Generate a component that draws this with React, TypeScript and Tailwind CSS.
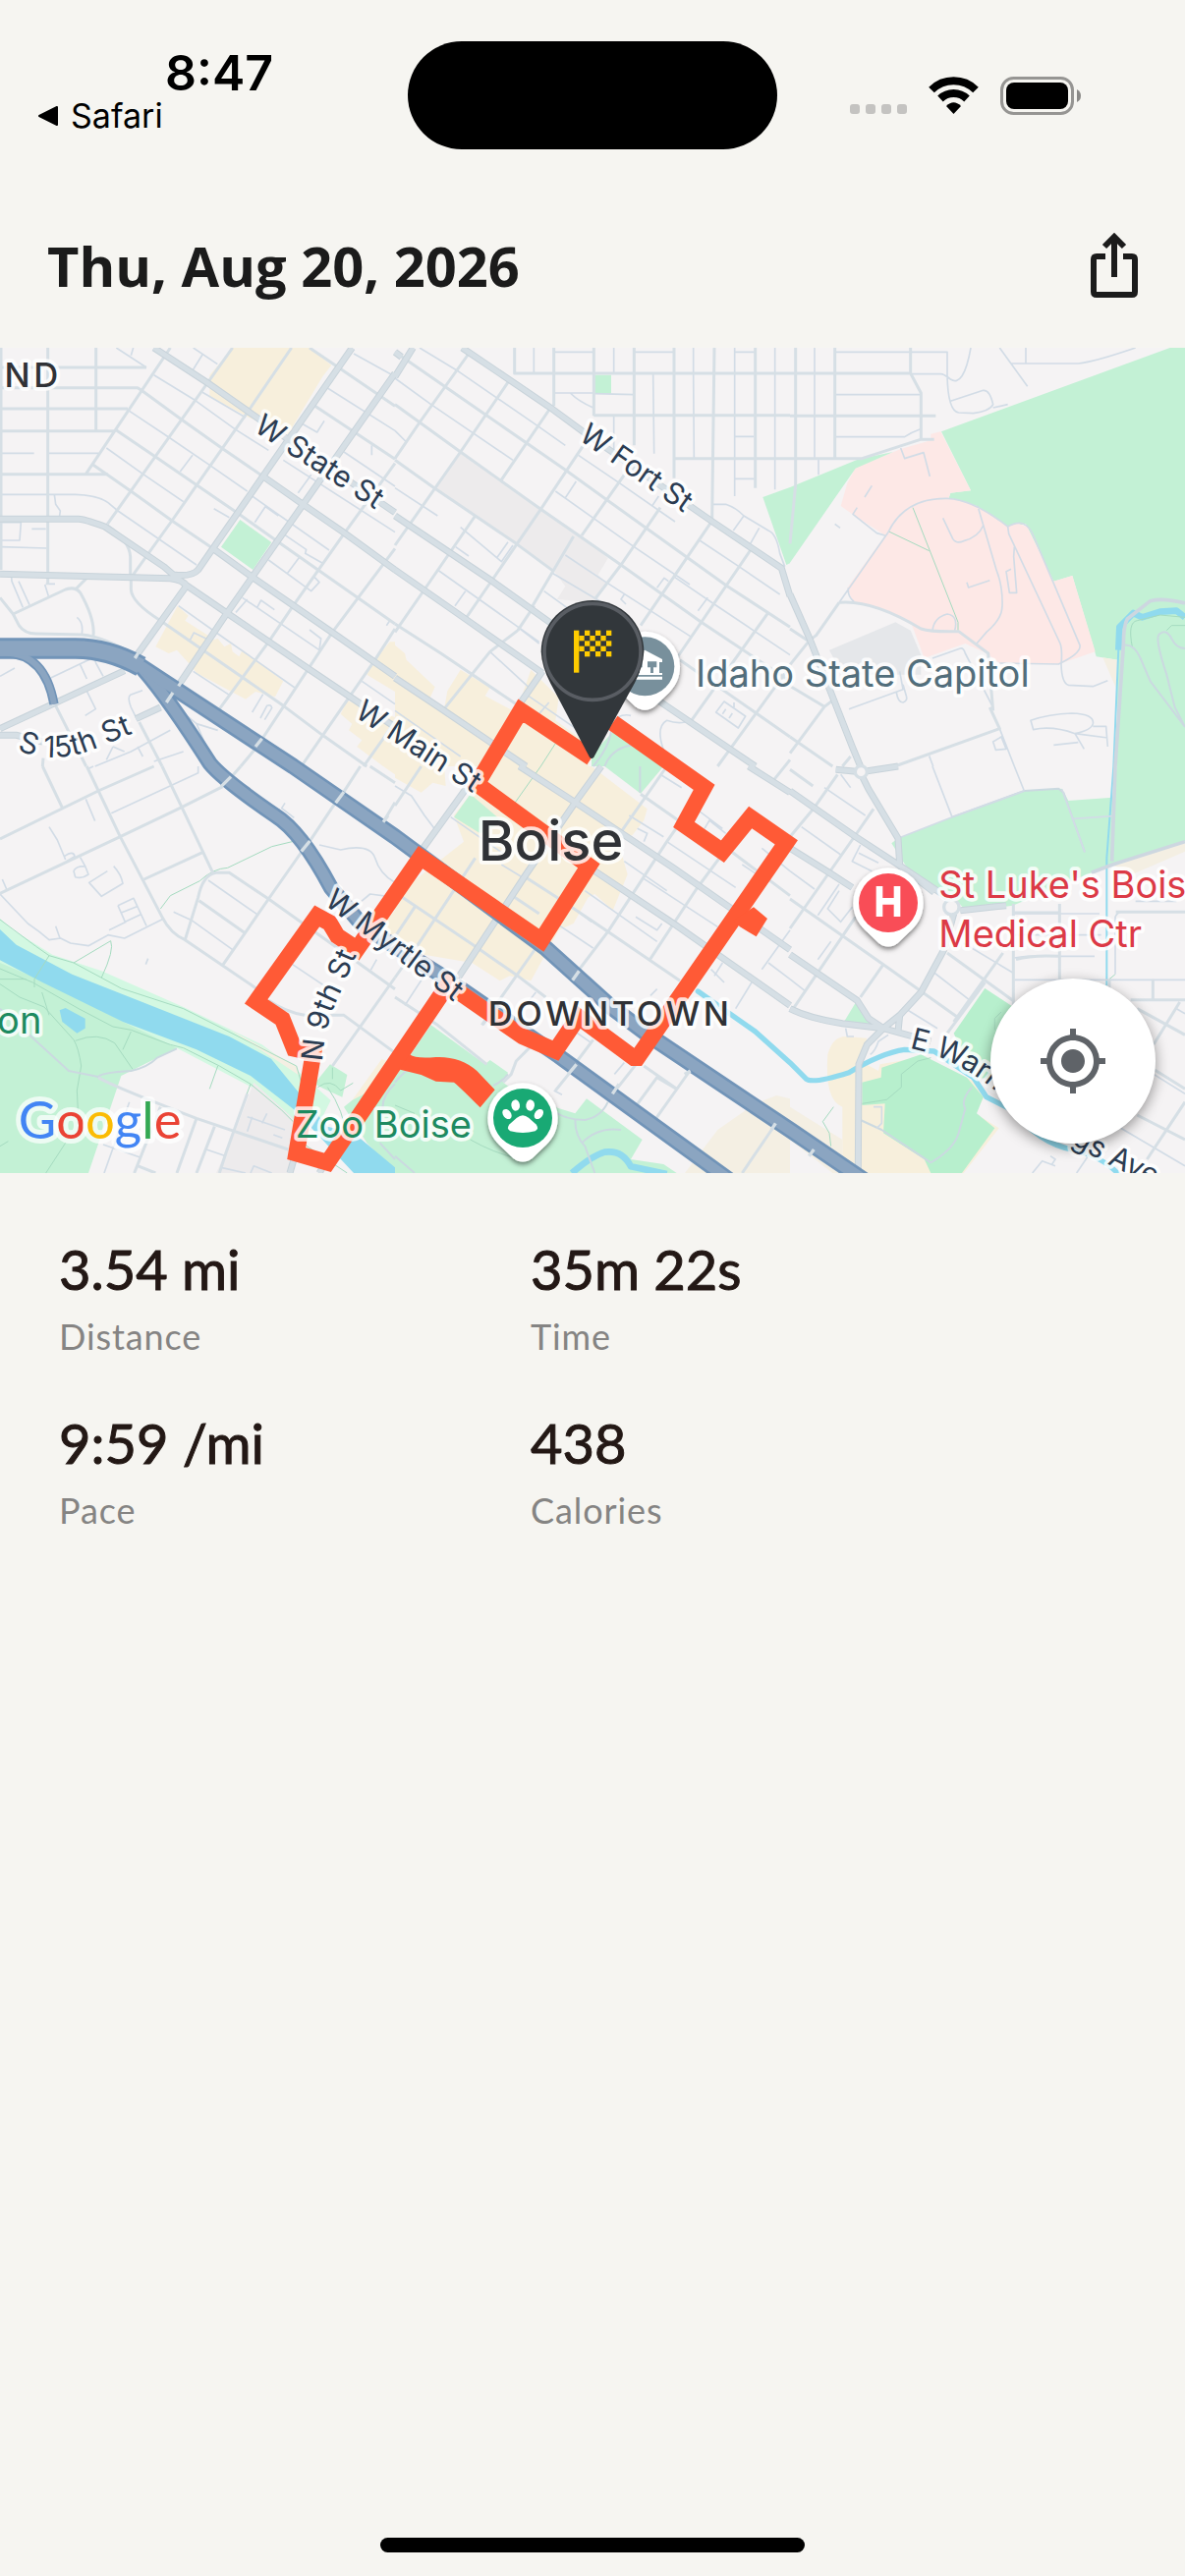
import { MdMyLocation } from "react-icons/md";

type Tile = {
  x: number;
  y: number;
  areas: [string, string][];
  minor: string;
  local: string;
  arterial: string;
  park: string;
  trail: string;
};

const GREEN = "#c3f1d5";
const DEEP_GREEN = "#b7efcd";
const SAND = "#f7efdc";
const PALE_SAND = "#f4efe3";
const PINK = "#fde8e6";
const GREY = "#edebec";
const WATER = "#90daee";

// The map is cut in six tiles, every path is in its own tile's units
const tiles: Tile[] = [
  {
    x: 0,
    y: 0,
    areas: [
      [SAND, "M712 12H945L1012 65L985 100L880 275L760 225L640 160V95Z"],
      [GREEN, "M733 537L829 606L772 690L675 620Z"],
      [SAND, "M542 800L575 830L565 845L635 890L630 910L665 900L685 925L705 915L710 940L730 955L740 935L865 1030L840 1078L780 1062L750 1085L600 1005L585 985L540 935L515 945L475 925Z"],
      [SAND, "M1206 910H1190L1145 965L1120 1010L1206 1062Z"],
      [SAND, "M1206 1140L1060 1090L1040 1130L1075 1160L1065 1180L1105 1210L1090 1230L1170 1290H1206Z"],
    ],
    minor:
      "M355 12L447 72M407 12L400 35M590 12L664 62M618 33L590 78M148 334H300M5 334H104M5 460H230Q300 462 330 485L360 510L600 675M166 460L170 490L184 510L182 525M5 545H64L60 600H5M97 565H140M5 620L142 624M395 205L515 285L640 370L755 450M325 318L437 398L560 482M470 95L595 172L720 262L820 325M618 148L750 225M550 390L588 340M770 465L1005 630M653 503L700 530M778 545L810 497L850 525M865 355L1206 575M865 580L935 628L932 640L985 670M820 660L950 755L975 728L960 712M878 700L915 650M740 775L975 935L980 900L945 873M720 820L755 780M785 805L797 783L838 812M545 800L665 885L900 1050M580 905L592 882L640 905M590 1000L700 1072M925 245L968 270L990 235M1050 330L1206 435M1000 135L1206 265M1080 30L1206 100M35 712L36 725L70 805M57 725L90 797M137 735L148 770M140 733H168M235 835Q255 850 250 885M0 1015L45 990M155 1020L270 965Q290 955 293 975L315 1015M245 980L265 1023M265 1060L292 1115L260 1135M435 1058L398 1072Q388 1080 400 1110L420 1150M520 1095L600 1160L665 1180M600 1160L630 1230M770 1125L803 1070M795 1143L815 1105Q828 1100 830 1112L808 1148M1105 1030L1206 1100M290 1290L400 1245L520 1180M345 1230L380 1245M420 1230L436 1260M345 1230L325 1270M470 1275L560 1245M1180 860L1192 842M1135 310V340M910 455L950 400",
    local:
      "M3 12V690M146 12V735M293 12V265M0 72H447M0 134H420L432 142M0 198H390M0 266H350M0 398H330M262 398L520 12M328 550L710 12M403 710L525 540L765 195L890 12M432 142L553 230L680 320L808 408M350 260L475 345L730 520L850 605L1206 855M285 370L403 452L525 540L650 625M945 12L1030 70L1206 190M955 185L1206 352M670 1115L820 910L895 800L1050 580L1206 365M785 1230L1015 880L1206 625M920 1290L1145 965L1206 870M735 1290L785 1230M1110 1290L1206 1155M400 710V750Q402 790 490 845L620 935L865 1105L985 1195L1120 1290M328 555Q395 600 398 650V710M0 775L40 825L58 860Q75 885 110 885L250 888Q320 895 420 955M40 825L200 750Q230 740 245 760Q290 840 285 890M230 750L265 715M170 1105L263 1290M425 1155L495 1290M130 1290L132 1265",
    arterial:
      "M470 12L635 120L870 285L1206 515M808 408L925 490L1048 575L1206 690M650 625L770 712L1020 885L1206 1015M0 535H240Q255 535 320 558L500 680Q540 715 570 738M0 703L520 716Q560 722 570 738L693 822L943 993L1206 1170M1075 12L650 625L605 690Q585 712 530 705M1206 90L693 822L550 1035M570 738L418 950M0 1175L380 998M0 1195H50L130 1215M415 1145L490 1110M508 1092L528 1065",
    park: "",
    trail: "",
  },
  {
    x: 1206,
    y: 0,
    areas: [
      [GREY, "M200 330L450 505L570 585L650 655L620 705L645 730L610 790L495 780L520 740L490 700L370 610L120 440Z"],
      [GREEN, "M610 95H660V152H610Z"],
      [GREEN, "M1123 468L1206 438V670L1195 675Z"],
      [SAND, "M0 920L30 945L35 965L122 1048L105 1085L150 1115L160 1060L200 995L290 1050L275 1075L370 1125L415 995L500 1080L490 1150L600 1230L590 1290H0Z"],
      [GREEN, "M600 1255L665 1185L830 1290H600Z"],
    ],
    minor:
      "M424 12V90M668 12V90M488 25H605M488 150H605M535 150Q560 175 605 195M610 152L727 155M730 25H850M668 220V330M788 92L791 335M911 12V90L913 350M1037 12V465M1037 25H1100M1037 283H1095M1037 412H1097M1160 12V445M75 12L195 85L435 250L520 310M560 340L685 425L855 543M0 105L110 185L360 355M490 450L610 535L730 620L900 735M0 440L130 525M0 265L35 300L0 350M520 470L553 420M785 495L805 465M200 560L325 665L360 615M185 620L225 648M310 655L345 605M130 690L440 910M455 755L600 860M183 800L215 755M375 865L440 915M480 700L650 800M520 645L640 725L905 895M800 745L822 715L835 725M705 795L690 780L700 765M925 815L955 775M850 710L975 795L1206 950M930 600L1050 680L1175 765M970 490H1010Q1040 500 1065 525L1140 570Q1165 580 1175 640L1190 680M1033 570L1065 525M1085 610L1112 562M290 940L415 1055M980 1125L1005 1092L1070 1137L1048 1173ZM1000 1130L1010 1115M1020 1143L1030 1128M1035 1110V1095M820 1240Q795 1170 830 1150Q860 1160 885 1155M0 1120L200 1260M400 1070L560 1180M440 1130L470 1095M680 1140Q700 1130 720 1135",
    local:
      "M365 12V90H1206M485 12V190M607 12V220M607 218H1206M730 12V310M852 12V410M855 350H1206M975 12L968 540M1100 12V440M0 25L275 215L520 385L770 565L1015 740L1206 865M0 185L200 330L445 505L690 675L935 850L1206 1030M0 355L120 440L370 610L485 695M0 350L75 240L225 30M0 615L200 330L350 110M325 415L475 195M0 880L90 750L245 525M215 840L445 505L575 310M420 800L545 588M610 780L690 675L810 500M570 585L700 400M750 860L965 545M860 960L1085 630M375 875L425 800M985 1290L1206 985M905 1150L1140 820M870 965L1206 1200M0 855L140 945L370 1100M150 1115L290 940L375 875",
    arterial:
      "M205 12L475 195L570 265L965 540L1180 685L1206 770M0 525L290 720L500 870L820 1100L1100 1290M0 690L215 840L450 1005M0 1020L135 1110L400 1290M450 1000L380 1100M0 100L55 12M0 25L20 40",
    park: "M660 1180Q655 1230 605 1290M725 1225Q660 1235 640 1290",
    trail: "M443 510L372 610M490 1220L445 1290",
  },
  {
    x: 2412,
    y: 0,
    areas: [
      [GREEN, "M1160 12H1206V1290H998L1000 965L935 955L862 708L805 725L720 550L665 560L570 495L485 470L490 455L552 448L462 268Z"],
      [PINK, "M430 275L460 268L552 448L490 455L485 470L570 495L665 558L695 547L725 560L805 725L862 708L932 940L820 978L640 975L600 945L535 915L410 960L372 858L300 820L190 785L175 745L290 585L190 520L155 495L175 425L200 378L340 320L430 295Z"],
      [GREEN, "M0 438L210 352L315 330L200 380L0 668Z"],
      ["#e5e7ea", "M120 935L322 850L368 875L400 950V1010H160Z"],
      [PALE_SAND, "M955 958L1000 965L995 1050Z"],
    ],
    minor:
      "M75 12V350M87 350V400M140 25H480V95Q482 205 515 210L560 212Q610 205 620 185Q610 140 590 142L490 175M370 92H460Q470 92 490 108Q530 135 552 12M140 155H400M140 284H350Q370 270 398 260M620 195L665 185M640 12L725 130M675 60H880Q930 55 1055 12M720 12V60M338 318L350 350L408 332L427 405M228 468L250 433M205 500L192 520L265 578L290 585M137 550L153 562M150 790L300 575Q350 470 480 472Q560 475 665 558Q720 525 745 590L885 920Q890 945 820 978L640 975M665 558L668 580L825 915Q832 935 828 980Q830 1035 850 1042L925 1046L970 1028M573 495L630 690Q650 740 648 800Q648 840 600 880L570 915M467 532L497 595Q508 612 530 602Q575 590 590 555M685 620L683 650L692 760H670L660 695L675 688M540 728L545 744L610 722M178 745Q175 770 195 787M435 875Q440 835 480 825Q515 830 503 875M735 1150Q790 1130 860 1128Q930 1130 925 1160Q920 1180 870 1190Q800 1165 743 1178ZM870 1190L970 1203M925 1168H965L970 1230M870 1190L898 1237M805 1225L880 1217M435 960L520 930Q530 928 535 945L620 1110M180 1115L345 1055L335 1000M325 1065Q330 1095 345 1095Q360 1090 355 1075L345 1040M640 1175L685 1290M620 1215L645 1200L660 1237L628 1240ZM425 1258L437 1290",
    local:
      "M17 12V430L0 610M137 12V350M0 90H370M0 220H445M368 12V90L400 150V290M0 350H220L398 292H440M150 790Q250 780 400 870Q430 880 515 878L605 945L620 1120M150 790L80 890L60 905L0 980M320 1290L640 1175L610 1110M0 870L60 910M0 1045L105 1108L0 1250M105 1108L135 1085M0 1200L130 1290M160 1290L185 1260",
    arterial: "M0 765L60 900L190 1230L215 1290",
    park: "M1020 920Q1050 915 1070 960L1100 1030L1206 1170M1206 930Q1180 930 1165 900Q1150 870 1130 885Q1110 890 1150 1010L1175 1110L1206 1170",
    trail: "M375 500L513 850V875M302 573L425 632M1045 925Q1030 850 1060 845L1130 828L1206 835M1150 875L1165 860H1206",
  },
  {
    x: 0,
    y: 1290,
    areas: [
      ["#d3f8e2", "M0 465L40 500L160 575L310 625L560 735L800 850L915 935L1010 1020L970 1100H900L765 978L540 860L360 800L0 640Z"],
      [GREEN, "M0 600L130 655L250 715L375 780L540 860L370 945L270 1242H0Z"],
      [PALE_SAND, "M700 803L905 915L915 945L840 895Z"],
      [GREY, "M775 965L900 1080L880 1242H660L720 1110Z"],
      [GREEN, "M1008 910L1060 942L1045 1010L1000 990L960 970Z"],
      [SAND, "M1165 895L1206 905L1100 1030L1075 1020Z"],
      [GREEN, "M1050 1040L1075 1020L1206 950V1242L1120 1150Z"],
      [WATER, "M0 498L50 545L220 635L700 825L828 893L915 1000L1000 1100L1080 1120L1206 1225V1242H1080L900 1050L765 945L600 865L375 780L130 660L0 592Z"],
      [WATER, "M182 745L200 738L260 770V800L235 815L190 780Z"],
      [SAND, "M1170 0H1206V25Z"],
      [SAND, "M1206 440L1150 500L1206 540Z"],
    ],
    minor:
      "M262 100L290 167M150 185L175 225L200 285M196 275Q225 255 228 275L203 290M225 320Q230 305 260 305L270 330Q250 345 230 338ZM245 278L260 305M328 320L272 355L310 397L375 358Q370 330 347 305M360 425L408 403L447 487M360 425L382 475L430 452M370 447L418 428M333 500L385 475M7 345L20 375M0 390L85 480L120 505L150 530L185 525L215 540L270 548L330 515L380 525L500 465M170 488L183 525M530 445L585 470L710 560M636 348L785 452M340 143L605 20V0M268 8L285 0M870 112L860 128L898 157M445 605L452 587M975 240L1040 255Q1130 235 1145 280Q1160 330 1206 355M1070 440L1130 390L1206 400M1132 622L1150 590M893 605L1020 690M318 1242L395 1025M315 1155L430 1195M630 1170L690 1190M755 1070L870 1110M770 1070L755 1115M815 1060L800 1090M835 1125L862 1135M675 1225L750 1242M765 1242L775 1220L830 1242",
    local:
      "M130 0L192 130M265 0L367 215L495 460Q520 510 565 530L785 680M495 0L555 125L650 325M0 222L300 75L470 0M0 388L367 215L555 125L680 62M440 345L620 262M565 530L605 400Q620 330 660 325H700L820 405L1206 680M608 410L745 507M680 607L820 405L925 255M700 40L735 0M1100 0L1045 85M1025 110L945 230M1015 915L1206 645M820 715Q870 750 930 760H1050L1206 875M1130 0L1206 50M1170 170L1206 110M300 950Q340 975 600 1075L880 1170M600 1075L540 1242M490 1040L410 1242M420 1220L475 1242M655 1100L600 1242M670 1242L690 1180L755 1000",
    arterial: "M900 1190L885 1242M1000 1200L975 1242",
    park: "M0 740L95 825L210 930L300 948Q310 935 400 930Q450 920 480 890L540 862M300 950L350 975M1206 970Q1160 1010 1170 1060M1160 1150L1206 1200",
    trail:
      "M490 435L520 395L610 350Q650 312 695 310L830 245L900 228M225 600L338 533Q350 560 310 645M150 578L105 650V675M0 468L110 550L150 578L225 600L370 678L560 740L905 915L930 1000M0 618L100 660L240 740L345 795L400 805L520 850L560 860L670 915L765 970L860 1050L895 1085M0 650H80M0 665L60 705L135 735L225 835Q240 860 248 915L235 990L238 1050M230 838Q300 810 350 845L405 925M375 865L400 810M665 915L640 985M128 690L150 760M140 1242L200 1150M765 970L750 1010M970 980Q1010 950 1040 990L1078 967M1015 920V955M1000 980Q1050 1050 1060 1140M930 1155L1060 1242M0 1160L25 1145",
  },
  {
    x: 1206,
    y: 1290,
    areas: [
      [SAND, "M250 0H600L770 130L760 165L725 210L680 225L710 330L665 440L610 390L590 400L545 480L500 500L415 655L350 640L320 655L235 600L0 560V395L210 230L180 150L250 60Z"],
      [SAND, "M0 0H150L155 60L115 50L80 80L0 35Z"],
      [GREEN, "M180 155L230 85L330 170L260 205Z"],
      [GREEN, "M640 0H820L750 83Z"],
      [GREEN, "M110 790L275 910L290 897L345 935L330 965L390 1010L550 1060L585 1015L755 1140L720 1200L820 1215L860 1242H0V950Z"],
      [PALE_SAND, "M1165 1005L1206 1015V1242H885L985 1110L1100 1030Z"],
    ],
    minor:
      "M0 60L50 90L90 150L120 190M170 155L350 280M325 300L390 340M30 730L115 600M545 433L600 475M500 485L605 555M580 380L800 535M735 460L800 500L815 480M755 340L985 490M830 230L1040 370M700 290L830 380M740 190L770 205L760 230M715 150L820 215M920 130L1000 190M945 190L960 165L1010 205M810 25L875 65M965 620L1005 660M1000 600L975 640M1040 740L1095 650M1140 600L1206 650M1120 620L1206 500M670 940L700 905M780 700L800 680M550 810L600 845M485 990L510 1003M375 760L430 690M270 790L290 760M1120 250L1206 320M1060 300L1120 340",
    local:
      "M0 120L80 0M0 385L245 550L375 640L460 705M60 430L0 520M0 645L60 560L245 280M400 340L510 410L650 505L870 655M365 400L440 450M555 630L650 505L830 230L900 130M775 595L920 375L1050 200M265 790L430 555M750 85L900 190M680 215L830 0M1000 240L1206 395M790 1085L900 930M730 1045L800 950L860 985M760 915L860 985M665 1000L740 905M1060 1242L1160 1095M490 990L530 940M545 915L605 835M0 705L130 790L280 910M330 965L355 940L370 900L440 830M1150 50L1206 -20",
    arterial:
      "M380 0L550 110L850 310L1206 560M610 320L850 480L1206 730M75 265L230 50M190 650L400 330L550 110L630 0M1080 0L1206 80",
    park: "M0 965Q30 930 50 920M300 975Q330 960 345 940M480 1050Q520 1080 580 1080Q630 1070 650 1025M550 1080Q550 1130 580 1160L610 1242M570 1150Q620 1100 690 1110M0 1190L60 1242M748 0V80",
    trail: "M445 0L360 120M0 1035L60 1060M230 1140Q300 1180 380 1200",
  },
  {
    x: 2412,
    y: 1290,
    areas: [
      [GREEN, "M330 220L495 155L715 75L830 68L850 105L985 95L998 0H1206V228L985 302L920 325L680 425L540 445L500 400L370 330L310 235Z"],
      [PALE_SAND, "M1206 235L985 302L1050 328L1206 260Z"],
      [GREEN, "M200 722L165 780L255 795Z"],
      [DEEP_GREEN, "M595 678L690 740V960L560 950L500 815Z"],
      [SAND, "M115 880Q130 825 170 825L235 830L215 900L270 930L275 910L390 890L560 960L595 1005L565 1060L638 1105L530 1242H160V1040Q105 1020 115 880Z"],
      [PALE_SAND, "M0 1040L160 1140V1242H130L0 1140Z"],
      [DEEP_GREEN, "M220 965L278 950L280 920L400 880L540 950L590 1010L570 1060L625 1105L525 1242H430L410 1200L285 1120L290 1030L220 1035Z"],
    ],
    minor:
      "M435 0L495 155M685 0L715 75M155 25L185 65M105 65L230 150M35 185L155 270M215 240L190 290L250 320M210 265L270 295M240 250L300 290M0 320L75 375M150 380L115 435L155 475L190 430M85 455L150 360M85 590L125 535M440 630L550 715M360 745L450 800M530 540L680 630M0 650L45 685M685 450H945M685 515H950M685 652H1206M685 585Q740 575 830 580H930M993 635V460Q1000 445 1010 445M1055 412H1180M170 800L175 825H195M245 880Q260 870 270 840L300 820M255 1040H280V1090L265 1105M1180 740L1206 755M740 1242L770 1205L810 1220M795 1190L810 1200L800 1215M875 1242L910 1190M1010 1105L1206 1220M1110 940L1206 1000M495 155L330 220M495 155L715 75M865 160L985 152M830 70L900 262",
    local:
      "M0 215L75 125L145 25M0 495L200 210L255 130M0 10L70 60M10 740L200 460M0 405L285 605L510 765M215 705L285 605M500 780L650 570M480 815L595 660M480 570L680 715M682 420V740M823 420V650M690 590Q740 575 823 580M685 447H823M995 445H1206M1040 713H1206M1108 650V710M975 650V700M1060 740L1206 820M1110 850L1190 720M1110 925L1206 985M1090 1200L1206 1025M1060 1065L1206 1140",
    arterial:
      "M0 75L200 215L330 300L480 400M0 250L120 325L190 370M0 575L205 715L240 770L285 800M0 740Q60 770 160 785L285 800L430 840M220 30L240 70L330 220L335 300M500 450L470 560L400 690L335 760L285 800L235 850L210 910L208 1230M335 760L330 810M520 440L660 425M330 300L440 385M140 10L217 17L330 0",
    park: "M215 1080L280 1110L430 1210Q500 1170 515 1120L535 1045Q520 1020 555 980M495 155L715 75L820 68L835 80L900 262",
    trail:
      "M220 1030L295 1018L340 980V940L390 900L430 890M133 1040L100 1085L120 1120L125 1160M625 805V770L645 750M993 635L975 650",
  },
];

const highways = [
  "M0 945Q135 935 165 1100",
  "M420 975Q500 1060 640 1280Q680 1330 840 1440Q920 1490 1010 1660L1110 1780L1350 1930L1706 2175L2230 2555",
  "M0 930H230Q330 930 430 985L895 1290L1206 1505L1666 1845L1866 2025L1986 2115L2412 2400L2640 2555",
];

// short pieces of street that pass over the highway
const overpasses =
  "M412 960L422 944M508 1095L528 1065M545 1045L555 1030M780 1230L800 1205M675 1352L705 1322M920 1550L946 1518M1025 1402L1050 1368M1170 1460L1185 1440M1748 1943L1768 1915M1735 2230L1760 2200M1870 2290L1890 2260M2090 2230L2108 2220M2355 2400L2368 2380M2470 2480L2485 2460";

const streams =
  "M2131 1977L2306 2100L2412 2195L2462 2245Q2482 2260 2592 2225Q2692 2165 2762 2155L2852 2160L2972 2240L3012 2300L3092 2340Q3172 2440 3272 2460Q3362 2480 3412 2532";

const routePath =
  "M1806 1264L1590 1120L1456 1344L1798 1594L1653 1821L1284 1568L1090 1848L1030 1808L1006 1768L968 1747L782 2008L862 2062L898 2152L957 2165L905 2472L1000 2500L1368 1956L1596 2115L1696 2158L1766 2055L1935 2180H1946L2401 1522L2291 1446L2206 1550L2088 1468L2150 1354L1871 1157";

const pinShape =
  "M-107 0A107 107 0 0 1 107 0C107 34 94 60 72 82L30 122Q0 145 -30 122L-72 82C-94 60 -107 34 -107 0Z";

const flagSquares = Array.from({ length: 5 }).flatMap((_, row) =>
  [0, 1, 2].map((col) => ({
    x: (row % 2 === 0 ? 1785 : 1768) + col * 33,
    y: 875 + row * 16,
  }))
);

const stats = [
  { value: "3.54 mi", label: "Distance" },
  { value: "35m 22s", label: "Time" },
  { value: "9:59 /mi", label: "Pace" },
  { value: "438", label: "Calories" },
];

const halo =
  "fill-current stroke-white/80 stroke-[22px] [paint-order:stroke] [stroke-linejoin:round]";

function StatusBar() {
  return (
    <div className="grid grid-cols-[1fr_auto_1fr] pt-[42px] font-['Inter',sans-serif] text-black">
      <div className="flex flex-col items-start">
        <span className="pl-[168px] text-[50px] leading-[64px] font-semibold">
          8:47
        </span>
        <a href="#safari" className="flex items-center gap-3 pl-[38px]">
          <svg viewBox="0 0 22 22" className="h-[22px] w-[22px]">
            <path
              d="M2 11L20 2V20Z"
              fill="#000"
              stroke="#000"
              strokeWidth="2"
              strokeLinejoin="round"
            />
          </svg>
          <span className="text-[34px] leading-[24px]">Safari</span>
        </a>
      </div>
      <div className="h-[110px] w-[376px] rounded-full bg-black" />
      <div className="flex h-[110px] items-center justify-end gap-[22px] pr-[106px]">
        <div className="flex gap-[6px] pt-[28px]">
          {[0, 1, 2, 3].map((i) => (
            <div key={i} className="h-[10px] w-[10px] rounded-[3px] bg-[#c4c3c1]" />
          ))}
        </div>
        <svg viewBox="0 0 51 38" className="h-[38px] w-[51px]" aria-label="Wi-Fi">
          <g fill="none" stroke="#000" strokeWidth="8">
            <path d="M3 13.5A32 32 0 0 1 48 13.5" />
            <path d="M12 22.5A19.500 19.500 0 0 1 39 22.500" />
          </g>
          <path d="M25.500 38L18 30Q25.500 22.500 33 30Z" fill="#000" />
        </svg>
        <svg viewBox="0 0 82 39" className="h-[39px] w-[82px]" aria-label="Battery">
          <rect
            x="1.5"
            y="1.5"
            width="72"
            height="36"
            rx="12"
            fill="none"
            stroke="#969593"
            strokeWidth="3"
          />
          <rect x="6" y="6" width="63" height="27" rx="8" fill="#000" />
          <path d="M78 13Q82 15 82 19.500T78 26Z" fill="#8a8987" />
        </svg>
      </div>
    </div>
  );
}

function RouteMap() {
  return (
    <svg
      viewBox="0 12 3618 2520"
      preserveAspectRatio="xMidYMid slice"
      className="block h-[840px] w-full bg-[#f5f3f4] font-['Inter',sans-serif]"
    >
      <defs>
        <filter id="pinShadow" x="-30%" y="-30%" width="160%" height="170%">
          <feDropShadow dx="0" dy="8" stdDeviation="8" floodOpacity="0.5" />
        </filter>
        <path id="s15th" d="M52 1240Q160 1285 280 1240L500 1150" />
        <path id="n9th" d="M984 2192Q990 2080 1040 1980L1120 1790" />
        <path
          id="warm"
          d="M2776 2150Q2900 2175 3020 2265L3180 2390Q3300 2460 3372 2500L3580 2600"
        />
      </defs>

      {tiles.map((t) => (
        <g key={`a${t.x}-${t.y}`} transform={`translate(${t.x} ${t.y})`}>
          {t.areas.map(([fill, d]) => (
            <path key={d} d={d} fill={fill} />
          ))}
        </g>
      ))}

      <g fill="none" stroke={WATER} strokeLinejoin="round">
        <path d={streams} strokeWidth="16" strokeLinecap="round" />
        <path
          d="M1746 2532Q1806 2480 1846 2468Q1900 2460 1926 2512L2036 2535"
          strokeWidth="20"
        />
        <path d="M3415 935L3418 865L3460 822L3487 835L3542 818L3592 815L3618 835" strokeWidth="20" />
        <path d="M3415 930L3400 1290L3379 1570V1960" strokeWidth="6" />
      </g>

      {tiles.map((t) => (
        <g
          key={`m${t.x}-${t.y}`}
          transform={`translate(${t.x} ${t.y})`}
          fill="none"
          strokeLinejoin="round"
        >
          <path d={t.trail} stroke="#a5dbc0" strokeWidth="3" />
          <path d={t.park} stroke="#cbd9e0" strokeWidth="6" />
          <path d={t.minor} stroke="#d2dce6" strokeWidth="5" />
          <path d={t.local} stroke="#d6dfe5" strokeWidth="9" />
        </g>
      ))}
      <path
        d="M3618 792Q3552 775 3512 785L3442 840Q3430 860 3430 920L3405 1290L3395 1580M3618 1520L3397 1590L3332 1615"
        fill="none"
        stroke="#cdd7e0"
        strokeWidth="11"
      />
      {[
        { stroke: "#c8d3da", width: 21 },
        { stroke: "#d6dfe5", width: 15 },
      ].map((s) => (
        <g key={s.width} fill="none" stroke={s.stroke} strokeWidth={s.width}>
          {tiles.map((t) => (
            <path
              key={`r${t.x}-${t.y}`}
              d={t.arterial}
              transform={`translate(${t.x} ${t.y})`}
            />
          ))}
        </g>
      ))}
      <g fill="#f5f3f4" stroke="#d6dfe5" strokeWidth="10">
        <circle cx="2629" cy="1307" r="18" />
        <circle cx="2905" cy="1720" r="23" />
      </g>

      <g fill="none" strokeLinejoin="round">
        <path d={highways[0]} stroke="#7194b8" strokeWidth="28" />
        <path d={highways[1]} stroke="#7194b8" strokeWidth="48" />
        <path d={highways[2]} stroke="#7194b8" strokeWidth="50" />
        <path d="M0 930H230Q330 930 430 985" stroke="#7194b8" strokeWidth="64" />
        <path d={highways[0]} stroke="#8ba5c1" strokeWidth="18" />
        <path d={highways[1]} stroke="#8ba5c1" strokeWidth="32" />
        <path d={highways[2]} stroke="#8ba5c1" strokeWidth="34" />
        <path d="M0 930H230Q330 930 430 985" stroke="#8ba5c1" strokeWidth="46" />
        <path d={overpasses} stroke="#d6dfe5" strokeWidth="10" />
      </g>

      <path d={routePath} fill="none" stroke="#ff5a36" strokeWidth="50" />
      <path
        d="M2301 1720L2343 1755L2309 1810L2259 1780L2240 1760ZM1251 2170Q1270 2184 1331 2178Q1406 2175 1456 2220L1511 2278L1466 2332Q1410 2275 1386 2255L1331 2252L1286 2232L1216 2215Z"
        fill="#ff5a36"
      />

      <g className={`${halo} text-[90px] text-[#2b3c52]`}>
        <text transform="translate(772 264) rotate(33)">W State St</text>
        <text transform="translate(1764 290) rotate(35)">W Fort St</text>
        <text transform="translate(1080 1136) rotate(33)">W Main St</text>
        <text transform="translate(988 1710) rotate(37)">W Myrtle St</text>
        <text>
          <textPath href="#s15th">S 15th St</textPath>
        </text>
        <text>
          <textPath href="#n9th">N 9th St</textPath>
        </text>
        <text>
          <textPath href="#warm">E Warm Springs Ave</textPath>
        </text>
      </g>
      <g className={`${halo} text-[104px] font-medium tracking-widest text-[#303236]`}>
        <text x="188" y="131" textAnchor="end">
          ND
        </text>
        <text x="1490" y="2081">
          DOWNTOWN
        </text>
      </g>
      <text x="1460" y="1578" className={`${halo} text-[168px] font-medium text-[#303236]`}>
        Boise
      </text>
      <g className={`${halo} text-[114px]`}>
        <text x="2124" y="1046" className="text-[#526e7b]">
          Idaho State Capitol
        </text>
        <text x="2866" y="1693" className="text-[#dc3a46]">
          St Luke's Boise
        </text>
        <text x="2866" y="1843" className="text-[#dc3a46]">
          Medical Ctr
        </text>
        <text x="127" y="2107" textAnchor="end" className="text-[#1d8a60]">
          on
        </text>
        <text x="902" y="2425" className="text-[#1d8a60]">
          Zoo Boise
        </text>
      </g>

      {/* Idaho State Capitol */}
      <g transform="translate(1969 985)">
        <path d={pinShape} fill="#fff" filter="url(#pinShadow)" />
        <circle r="90" fill="#78909c" />
        <path
          d="M-53 -22L0 -50L53 -22V-13H44V20H53V40H-53V20H-44V-13H-53Z"
          fill="#fff"
        />
        <path d="M-36 -15H-8V3H-16V20H-28V3H-36ZM8 -15H36V3H26V20H17V3H8ZM-53 26H53V31H-53Z" fill="#78909c" />
      </g>
      {/* Zoo Boise */}
      <g transform="translate(1596 2364)">
        <path d={pinShape} fill="#fff" filter="url(#pinShadow)" />
        <circle r="90" fill="#19a974" />
        <g fill="#fff">
          <ellipse cx="-22" cy="-39" rx="13" ry="17" transform="rotate(-8 -22 -39)" />
          <ellipse cx="23" cy="-39" rx="13" ry="17" transform="rotate(8 23 -39)" />
          <ellipse cx="-48" cy="-12" rx="12" ry="17" transform="rotate(-38 -48 -12)" />
          <ellipse cx="49" cy="-12" rx="12" ry="17" transform="rotate(38 49 -12)" />
          <path d="M-18 -1Q0 -16 18 -1L40 19Q52 32 38 40Q0 50 -38 40Q-52 32 -40 19Z" />
        </g>
      </g>
      {/* St Luke's */}
      <g transform="translate(2712 1707)">
        <path d={pinShape} fill="#fff" filter="url(#pinShadow)" />
        <circle r="90" fill="#f94d57" />
        <path d="M-27 -51V42M27 -51V42M-27 -5H27" stroke="#fff" strokeWidth="20" />
      </g>

      {/* finish marker */}
      <path
        d="M1652 940A157 157 0 0 1 1966 940Q1964 985 1938 1035L1813 1262Q1806 1270 1800 1262L1680 1035Q1654 985 1652 940Z"
        fill="#32373b"
      />
      <circle cx="1809" cy="940" r="147" fill="none" stroke="#595d63" strokeWidth="11" />
      <path d="M1752 875H1768V1004H1752Z" fill="#fc0" />
      {flagSquares.map((s) => (
        <rect key={`${s.x}-${s.y}`} x={s.x} y={s.y} width="16" height="16" fill="#fc0" />
      ))}

      <text
        x="56"
        y="2426"
        className="fill-current stroke-white/70 stroke-[30px] font-['Lato',sans-serif] text-[158px] [paint-order:stroke] [stroke-linejoin:round]"
      >
        <tspan className="text-[#4285f4]">G</tspan>
        <tspan className="text-[#ea4335]">o</tspan>
        <tspan className="text-[#fbbc04]">o</tspan>
        <tspan className="text-[#4285f4]">g</tspan>
        <tspan className="text-[#34a853]">l</tspan>
        <tspan className="text-[#ea4335]">e</tspan>
      </text>
    </svg>
  );
}

export default function App() {
  return (
    <div className="flex min-h-screen flex-col bg-[#f6f5f1]">
      <StatusBar />

      <header className="flex h-[202px] items-center justify-between pt-[34px] pr-12 pl-[48px]">
        <h1 className="font-['Open_Sans',sans-serif] text-[56px] leading-[72px] font-bold text-[#1b1b1b]">
          Thu, Aug 20, 2026
        </h1>
        <button type="button" aria-label="Share">
          <svg viewBox="0 0 48 66" className="h-[66px] w-[48px]">
            <g fill="none" stroke="#1b1b1b" strokeWidth="6">
              <path d="M15 24H6Q3 24 3 27V60Q3 63 6 63H42Q45 63 45 60V27Q45 24 42 24H33" />
              <path d="M24 5V45M14 14L24 4L34 14" />
            </g>
          </svg>
        </button>
      </header>

      <section className="relative">
        <RouteMap />
        <button
          type="button"
          aria-label="My location"
          className="absolute right-[30px] bottom-[30px] flex h-[168px] w-[168px] items-center justify-center rounded-full bg-white text-[#5f6368] shadow-[0_4px_14px_rgba(0,0,0,0.4)]"
        >
          <MdMyLocation className="h-[72px] w-[72px]" />
        </button>
      </section>

      <dl className="grid grid-cols-[480px_1fr] gap-y-[41px] px-[60px] pt-[58px] font-['Lato',sans-serif]">
        {stats.map((stat) => (
          <div key={stat.label} className="flex flex-col-reverse">
            <dt className="text-[36px] leading-[56px] tracking-wide text-[#858483]">
              {stat.label}
            </dt>
            <dd className="text-[56px] leading-[80px] text-[#231815] [-webkit-text-stroke:1px_#231815]">
              {stat.value}
            </dd>
          </div>
        ))}
      </dl>

      <div className="mt-auto flex justify-center pb-6">
        <div className="h-[15px] w-[432px] rounded-full bg-black" />
      </div>
    </div>
  );
}
